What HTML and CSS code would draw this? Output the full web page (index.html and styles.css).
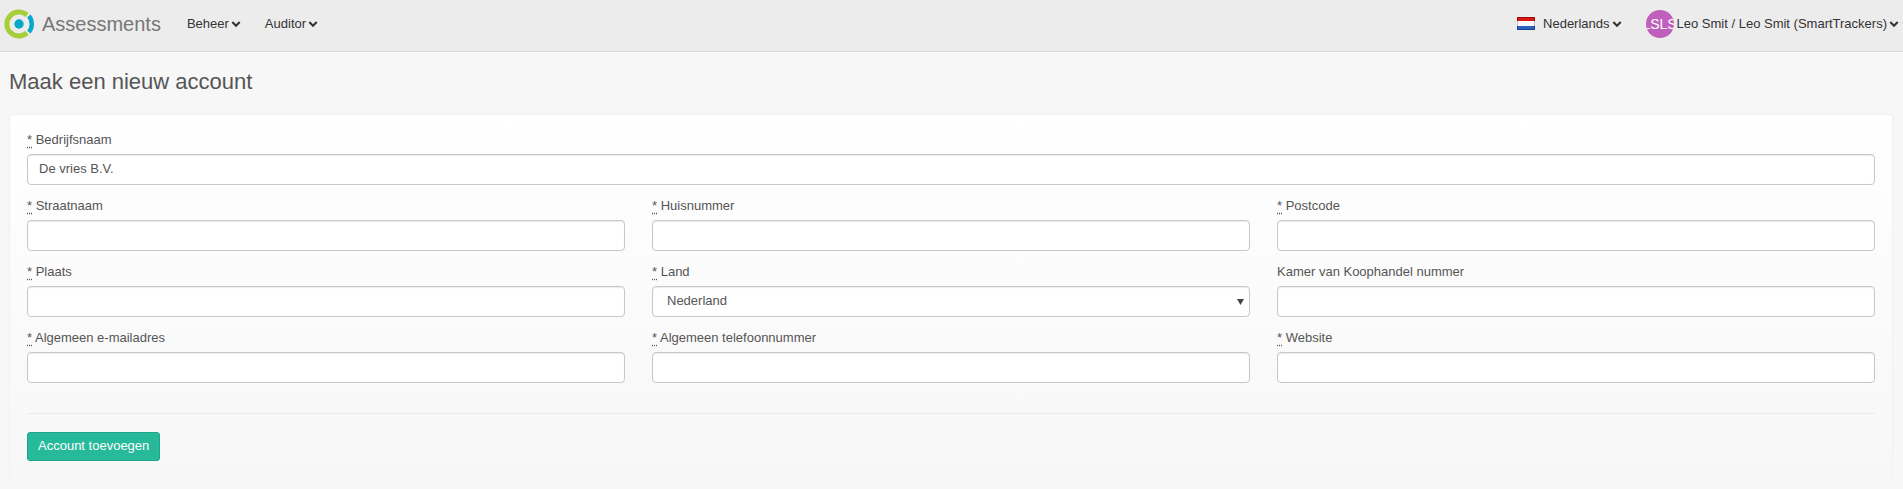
FILE: index.html
```html
<!DOCTYPE html>
<html lang="nl">
<head>
<meta charset="utf-8">
<title>Maak een nieuw account</title>
<link rel="stylesheet" href="styles.css">
</head>
<body>
<svg class="defs" aria-hidden="true">
  <symbol id="chevron" viewBox="0 0 10 8"><path d="M1.3 2 5 5.7 8.7 2" fill="none" stroke="currentColor" stroke-width="2.1"/></symbol>
</svg>
<header class="navbar">
  <a class="brand" href="#">
    <svg class="logo" viewBox="0 0 30 30" aria-hidden="true">
      <path d="M22.9 6.1A12 12 0 1 0 22.9 23.9" fill="none" stroke="#a6ce39" stroke-width="5"/>
      <path d="M24.9 6.9A12.8 12.8 0 0 1 24.9 23.1" fill="none" stroke="#06a9c7" stroke-width="4.4"/>
      <circle cx="15" cy="15" r="4.7" fill="#06a9c7"/>
    </svg>
    <span>Assessments</span>
  </a>
  <nav class="menu">
    <a class="item" href="#">Beheer <svg class="chevron"><use href="#chevron"/></svg></a>
    <a class="item" href="#">Auditor <svg class="chevron"><use href="#chevron"/></svg></a>
  </nav>
  <nav class="menu account-menu">
    <a class="item" href="#">
      <svg class="flag" viewBox="0 0 18 13" aria-hidden="true">
        <rect width="18" height="13" rx="1" fill="#f8f8f8"/>
        <path d="M0 4V1Q0 0 1 0H17Q18 0 18 1V4Z" fill="#dd1515"/>
        <path d="M0 9V12Q0 13 1 13H17Q18 13 18 12V9Z" fill="#2f5fc0"/>
        <path d="M.5 4V.5H17.5V4" fill="none" stroke="#970a0a"/>
        <path d="M.5 9V12.5H17.5V9" fill="none" stroke="#173f8c"/>
        <path d="M.5 4V9M17.5 4V9" stroke="#c4c4c4"/>
      </svg>
      Nederlands <svg class="chevron"><use href="#chevron"/></svg></a>
    <a class="item user" href="#"><span class="avatar">LSLS</span>Leo Smit / Leo Smit (SmartTrackers) <svg class="chevron"><use href="#chevron"/></svg></a>
  </nav>
</header>
<main class="page">
  <h1 class="title">Maak een nieuw account</h1>
  <form class="panel">
    <div class="fields">
      <div class="field wide"><label for="company"><abbr title="verplicht">*</abbr> Bedrijfsnaam</label><input class="control" id="company" type="text" value="De vries B.V."></div>
      <div class="field"><label for="street"><abbr title="verplicht">*</abbr> Straatnaam</label><input class="control" id="street" type="text"></div>
      <div class="field"><label for="number"><abbr title="verplicht">*</abbr> Huisnummer</label><input class="control" id="number" type="text"></div>
      <div class="field"><label for="postcode"><abbr title="verplicht">*</abbr> Postcode</label><input class="control" id="postcode" type="text"></div>
      <div class="field"><label for="city"><abbr title="verplicht">*</abbr> Plaats</label><input class="control" id="city" type="text"></div>
      <div class="field"><label for="country"><abbr title="verplicht">*</abbr> Land</label><select class="control select" id="country"><option>Nederland</option></select></div>
      <div class="field"><label for="kvk">Kamer van Koophandel nummer</label><input class="control" id="kvk" type="text"></div>
      <div class="field"><label for="email"><abbr title="verplicht">*</abbr> Algemeen e-mailadres</label><input class="control" id="email" type="email"></div>
      <div class="field"><label for="phone"><abbr title="verplicht">*</abbr> Algemeen telefoonnummer</label><input class="control" id="phone" type="tel"></div>
      <div class="field"><label for="website"><abbr title="verplicht">*</abbr> Website</label><input class="control" id="website" type="url"></div>
    </div>
    <div class="actions"><button class="submit" type="submit">Account toevoegen</button></div>
  </form>
</main>
</body>
</html>
```
FILE: styles.css
```css
* { box-sizing: border-box; }
body {
  margin: 0;
  background: #f7f7f7;
  color: #555;
  font: 13px/20px "Liberation Sans", Arial, sans-serif;
}
.defs { position: absolute; width: 0; height: 0; }
.navbar {
  display: flex;
  align-items: center;
  padding: 0 4px 4px;
  min-height: 52px;
  background: #ececec;
  border-bottom: 1px solid #d9d9d9;
}
.brand {
  display: flex;
  align-items: center;
  gap: 8px;
  color: #777;
  font-size: 20px;
  text-decoration: none;
}
.logo { width: 30px; height: 30px; }
.menu { display: flex; align-items: center; gap: 24px; margin-left: 26px; }
.account-menu { margin-left: auto; }
.item {
  display: flex;
  align-items: center;
  gap: 2px;
  color: #333;
  text-decoration: none;
}
.chevron { width: 10px; height: 8px; }
.flag { width: 18px; height: 13px; margin-right: 6px; }
.avatar {
  display: flex;
  align-items: center;
  justify-content: center;
  width: 28px;
  height: 28px;
  margin-right: 1px;
  border-radius: 50%;
  overflow: hidden;
  background: #c05fbc;
  color: #fff;
  font-size: 14px;
}
.page { padding: 16px 10px 10px 9px; }
.title {
  margin: 0 0 18px;
  font-size: 22px;
  line-height: 28px;
  font-weight: 400;
}
.panel {
  padding: 15px 17px 18px;
  border: 1px solid #f0f0f0;
  border-bottom: 0;
  border-radius: 4px;
  background: linear-gradient(#fff, #f7f7f7);
}
.fields {
  display: grid;
  grid-template-columns: repeat(3, 1fr);
  gap: 11px 27px;
}
.wide { grid-column: 1 / -1; }
.field { display: grid; gap: 4px; }
abbr { text-decoration: underline dotted; text-underline-offset: 3px; }
.control {
  width: 100%;
  height: 31px;
  padding: 0 11px 2px;
  border: 1px solid #c8c8c8;
  border-radius: 4px;
  background: #fff;
  box-shadow: inset 0 1px 1px #ececec;
  color: #555;
  font: inherit;
}
.select {
  appearance: none;
  padding: 0 14px 2px;
  background: #fff url("data:image/svg+xml,%3Csvg xmlns='http://www.w3.org/2000/svg' width='7' height='6'%3E%3Cpath d='M0 0h7L3.5 6z' fill='%23444'/%3E%3C/svg%3E") no-repeat right 5px center;
}
.actions {
  margin-top: 30px;
  padding-top: 18px;
  border-top: 1px solid #ececec;
}
.submit {
  display: block;
  height: 29px;
  padding: 0 10px 2px;
  border: 1px solid #1fa68a;
  border-radius: 3px;
  background: #26b99a;
  color: #fff;
  font: inherit;
}
```
